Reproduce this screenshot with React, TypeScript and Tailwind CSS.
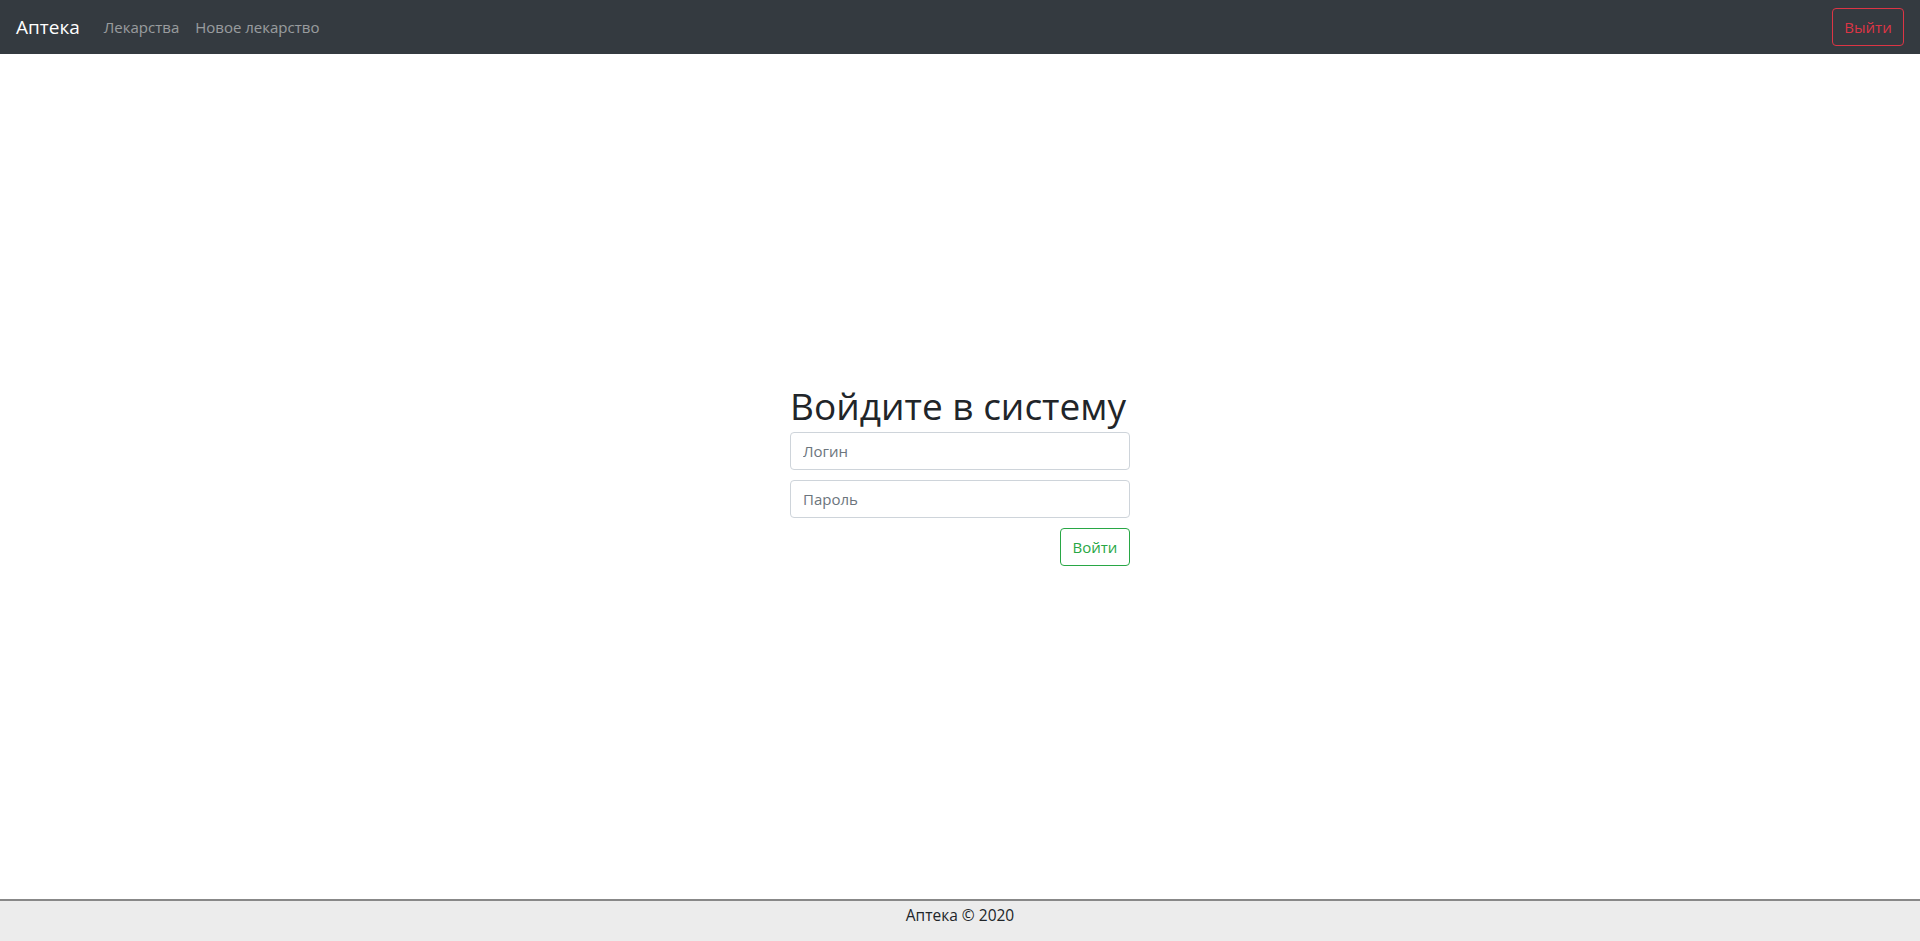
import { useState } from "react";

const font = { fontFamily: '"Open Sans", "Noto Sans", sans-serif' };

export default function App() {
  const [login, setLogin] = useState("");
  const [password, setPassword] = useState("");

  return (
    <div className="flex min-h-screen flex-col bg-white text-[#212529]" style={font}>
      <nav className="flex h-[54px] items-center justify-between bg-[#343a40] pl-4 pr-4">
        <div className="flex items-center">
          <a href="#" className="mr-4 text-[19px] text-white">Аптека</a>
          <a href="#" className="px-2 text-[15px] text-white/50">Лекарства</a>
          <a href="#" className="px-2 text-[15px] text-white/50">Новое лекарство</a>
        </div>
        <button className="h-[38px] w-[72px] rounded border border-[#dc3545] text-[15px] text-[#dc3545]">
          Выйти
        </button>
      </nav>

      <main className="flex flex-1 items-center justify-center pb-[1px]">
        <form className="flex w-[340px] flex-col" onSubmit={(e) => e.preventDefault()}>
          <h1 className="mb-[5px] text-[37px] leading-[1.1]">Войдите в систему</h1>
          <input
            value={login}
            onChange={(e) => setLogin(e.target.value)}
            placeholder="Логин"
            className="mb-[10px] h-[38px] rounded border border-[#ced4da] px-3 text-[15px] placeholder:text-[#6c757d]"
          />
          <input
            type="password"
            value={password}
            onChange={(e) => setPassword(e.target.value)}
            placeholder="Пароль"
            className="mb-[10px] h-[38px] rounded border border-[#ced4da] px-3 text-[15px] placeholder:text-[#6c757d]"
          />
          <div className="flex justify-end">
            <button className="h-[38px] w-[70px] rounded border border-[#28a745] text-[15px] text-[#28a745]">
              Войти
            </button>
          </div>
        </form>
      </main>

      <footer className="flex h-[42px] justify-center border-t-2 border-[#888888] bg-[#ececec] pt-[3px] text-[15.5px]">
        Аптека © 2020
      </footer>
    </div>
  );
}
